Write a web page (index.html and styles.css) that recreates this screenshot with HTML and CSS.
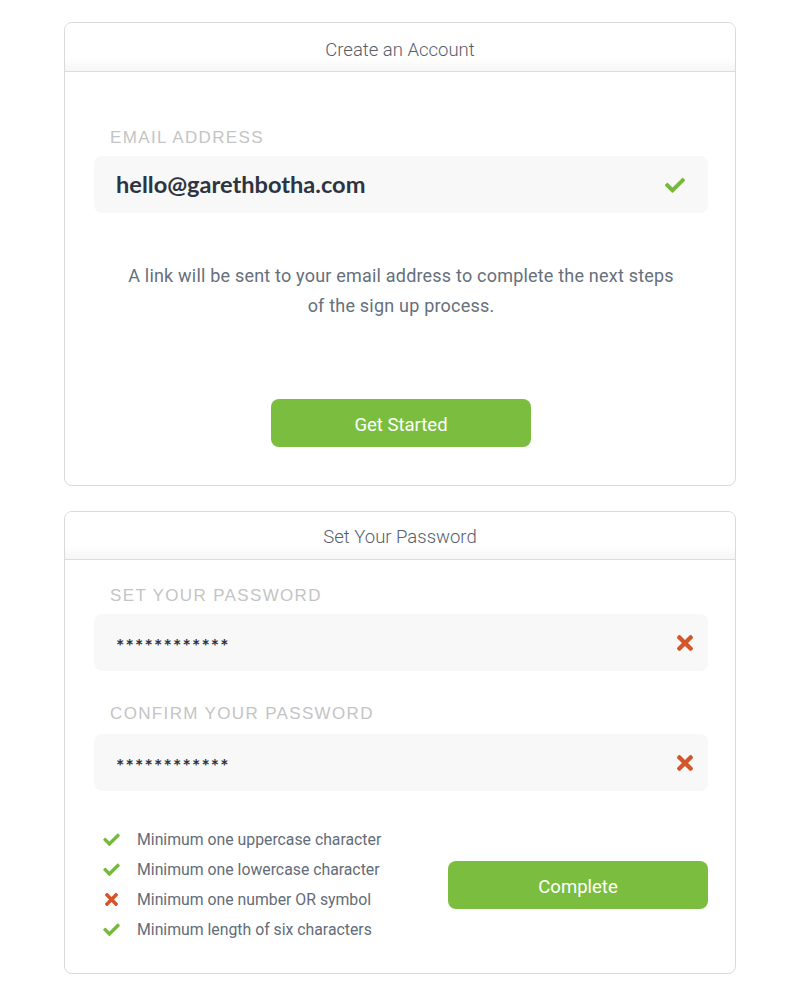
FILE: index.html
```html
<!DOCTYPE html>
<html>
<head>
<meta charset="utf-8">
<link rel="stylesheet" href="styles.css">
</head>
<body>
<section class="card card-account">
  <header class="card-head">Create an Account</header>
  <div class="card-body">
    <label class="field-label">EMAIL ADDRESS</label>
    <div class="field">
      <span class="field-value email">hello@garethbotha.com</span>
      <svg class="icon icon-check-lg" viewBox="0 0 512 400"><path d="M173.9 391.4l-166.4-166.4c-10-10-10-26.2 0-36.2l36.2-36.2c10-10 26.2-10 36.2 0L192 264.7 432.1 24.6c10-10 26.2-10 36.2 0l36.2 36.2c10 10 10 26.2 0 36.2l-294.4 294.4c-10 10-26.2 10-36.2 0z"/></svg>
    </div>
    <p class="note">A link will be sent to your email address to complete the next steps of the sign up process.</p>
    <div class="actions"><button class="btn">Get Started</button></div>
  </div>
</section>

<section class="card card-password">
  <header class="card-head">Set Your Password</header>
  <div class="card-body">
    <label class="field-label">SET YOUR PASSWORD</label>
    <div class="field">
      <span class="field-value pass">************</span>
      <svg class="icon icon-x-lg" viewBox="0 0 352 352"><path d="M242.7 176l100.1-100.1c12.3-12.3 12.3-32.2 0-44.5l-22.2-22.2c-12.3-12.3-32.2-12.3-44.5 0L176 109.3 75.9 9.2c-12.3-12.3-32.2-12.3-44.5 0L9.2 31.4c-12.3 12.3-12.3 32.2 0 44.5L109.3 176 9.2 276.1c-12.3 12.3-12.3 32.2 0 44.5l22.2 22.2c12.3 12.3 32.2 12.3 44.5 0L176 242.7l100.1 100.1c12.3 12.3 32.2 12.3 44.5 0l22.2-22.2c12.3-12.3 12.3-32.2 0-44.5L242.7 176z"/></svg>
    </div>
    <label class="field-label second">CONFIRM YOUR PASSWORD</label>
    <div class="field">
      <span class="field-value pass">************</span>
      <svg class="icon icon-x-lg" viewBox="0 0 352 352"><path d="M242.7 176l100.1-100.1c12.3-12.3 12.3-32.2 0-44.5l-22.2-22.2c-12.3-12.3-32.2-12.3-44.5 0L176 109.3 75.9 9.2c-12.3-12.3-32.2-12.3-44.5 0L9.2 31.4c-12.3 12.3-12.3 32.2 0 44.5L109.3 176 9.2 276.1c-12.3 12.3-12.3 32.2 0 44.5l22.2 22.2c12.3 12.3 32.2 12.3 44.5 0L176 242.7l100.1 100.1c12.3 12.3 32.2 12.3 44.5 0l22.2-22.2c12.3-12.3 12.3-32.2 0-44.5L242.7 176z"/></svg>
    </div>
    <div class="bottom">
      <ul class="rules">
        <li><svg class="icon ok" viewBox="0 0 512 400"><path d="M173.9 391.4l-166.4-166.4c-10-10-10-26.2 0-36.2l36.2-36.2c10-10 26.2-10 36.2 0L192 264.7 432.1 24.6c10-10 26.2-10 36.2 0l36.2 36.2c10 10 10 26.2 0 36.2l-294.4 294.4c-10 10-26.2 10-36.2 0z"/></svg>Minimum one uppercase character</li>
        <li><svg class="icon ok" viewBox="0 0 512 400"><path d="M173.9 391.4l-166.4-166.4c-10-10-10-26.2 0-36.2l36.2-36.2c10-10 26.2-10 36.2 0L192 264.7 432.1 24.6c10-10 26.2-10 36.2 0l36.2 36.2c10 10 10 26.2 0 36.2l-294.4 294.4c-10 10-26.2 10-36.2 0z"/></svg>Minimum one lowercase character</li>
        <li><svg class="icon bad" viewBox="0 0 352 352"><path d="M242.7 176l100.1-100.1c12.3-12.3 12.3-32.2 0-44.5l-22.2-22.2c-12.3-12.3-32.2-12.3-44.5 0L176 109.3 75.9 9.2c-12.3-12.3-32.2-12.3-44.5 0L9.2 31.4c-12.3 12.3-12.3 32.2 0 44.5L109.3 176 9.2 276.1c-12.3 12.3-12.3 32.2 0 44.5l22.2 22.2c12.3 12.3 32.2 12.3 44.5 0L176 242.7l100.1 100.1c12.3 12.3 32.2 12.3 44.5 0l22.2-22.2c12.3-12.3 12.3-32.2 0-44.5L242.7 176z"/></svg>Minimum one number OR symbol</li>
        <li><svg class="icon ok" viewBox="0 0 512 400"><path d="M173.9 391.4l-166.4-166.4c-10-10-10-26.2 0-36.2l36.2-36.2c10-10 26.2-10 36.2 0L192 264.7 432.1 24.6c10-10 26.2-10 36.2 0l36.2 36.2c10 10 10 26.2 0 36.2l-294.4 294.4c-10 10-26.2 10-36.2 0z"/></svg>Minimum length of six characters</li>
      </ul>
      <button class="btn btn-complete">Complete</button>
    </div>
  </div>
</section>
</body>
</html>
```
FILE: styles.css
```css
* { box-sizing: border-box; }
body {
  margin: 0;
  padding: 22px 0 0;
  background: #ffffff;
  font-family: Roboto, "Liberation Sans", sans-serif;
}
.card {
  width: 672px;
  margin: 0 auto 25px;
  border: 1px solid #d9d9d9;
  border-radius: 8px;
  background: #fff;
  overflow: hidden;
}
.card-head {
  height: 49px;
  border-bottom: 1px solid #dcdcdc;
  background: linear-gradient(to bottom, #ffffff 70%, #f6f6f6 100%);
  text-align: center;
  font-size: 18.5px;
  line-height: 55px;
  color: #555e6c;
  font-weight: 300;
}
.card-password .card-head { height: 48px; line-height: 51px; }
.card-body {
  padding: 0 27px 0 29px;
}
.card-account .card-body { padding-top: 56px; padding-bottom: 38px; }
.card-password .card-body { padding-top: 26px; padding-bottom: 29px; }
.field-label {
  display: block;
  padding-left: 16px;
  font-family: "Liberation Sans", Arial, sans-serif;
  font-size: 17px;
  line-height: 20px;
  letter-spacing: 1.35px;
  color: #c4c4c4;
  margin-bottom: 8px;
}
.card-password .field-label { margin-bottom: 8px; }
.card-password .field-label.second { margin-top: 33px; margin-bottom: 10px; }
.field {
  height: 57px;
  background: #f8f8f8;
  border-radius: 8px;
  display: flex;
  align-items: center;
  justify-content: space-between;
  padding: 0 23px 0 22px;
}
.field-value {
  color: #2c3441;
}
.email {
  font-family: Lato, sans-serif;
  font-weight: 700;
  font-size: 23.6px;
  margin-top: -2px;
}
.pass {
  font-family: Lato, sans-serif;
  font-weight: 700;
  font-size: 19.5px;
  letter-spacing: 1.2px;
  padding-top: 6px;
}
.icon { display: block; }
.icon-check-lg { width: 20px; height: 16px; fill: #77b93b; margin-right: 0; }
.icon-x-lg { width: 16px; height: 16px; fill: #d4552a; margin-right: -8px; }
.note {
  margin: 48px 0 0;
  padding: 0 30px;
  text-align: center;
  font-size: 18px;
  letter-spacing: 0.2px;
  line-height: 30px;
  color: #666f7c;
  font-weight: 400;
}
.actions {
  display: flex;
  justify-content: center;
  margin-top: 78px;
}
.btn {
  width: 260px;
  height: 48px;
  border: 0;
  border-radius: 8px;
  background: #7bbe3f;
  color: #ffffff;
  font-family: Roboto, "Liberation Sans", sans-serif;
  font-size: 18.5px;
  padding: 3px 0 0;
}
.bottom {
  margin-top: 33px;
  display: flex;
  align-items: center;
  justify-content: space-between;
}
.rules {
  list-style: none;
  margin: 0;
  padding: 0 0 0 9px;
}
.rules li {
  display: flex;
  align-items: center;
  height: 30px;
  font-size: 15.8px;
  color: #636c79;
}
.rules .icon { margin-right: 17px; }
.rules .ok { width: 17px; height: 13px; fill: #77b93b; }
.rules .bad { width: 13px; height: 13px; fill: #d4552a; margin-left: 2px; margin-right: 19px; }
.btn-complete { margin-top: 2px; }
```
